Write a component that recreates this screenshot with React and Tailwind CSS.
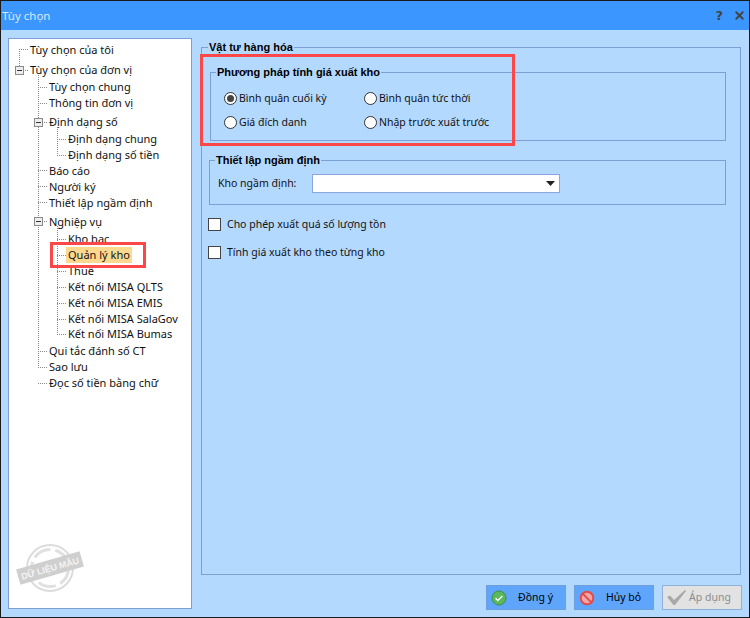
import { X } from 'lucide-react';

const treeRows = [
  { label: 'Tùy chọn của tôi', level: 0, cls: 'mt-[3px]' },
  { label: 'Tùy chọn của đơn vị', level: 0, cls: 'mt-[4px]' },
  { label: 'Tùy chọn chung', level: 1, cls: 'mt-[1px]' },
  { label: 'Thông tin đơn vị', level: 1, cls: '' },
  { label: 'Định dạng số', level: 1, cls: 'mt-[3px]' },
  { label: 'Định dạng chung', level: 2, cls: 'mt-[1px]' },
  { label: 'Định dạng số tiền', level: 2, cls: '' },
  { label: 'Báo cáo', level: 1, cls: '' },
  { label: 'Người ký', level: 1, cls: '' },
  { label: 'Thiết lập ngầm định', level: 1, cls: '' },
  { label: 'Nghiệp vụ', level: 1, cls: 'mt-[3px]' },
  { label: 'Kho bạc', level: 2, cls: 'mt-[1px]' },
  { label: 'Quản lý kho', level: 2, selected: true, cls: '' },
  { label: 'Thuế', level: 2, cls: '' },
  { label: 'Kết nối MISA QLTS', level: 2, cls: '' },
  { label: 'Kết nối MISA EMIS', level: 2, cls: '' },
  { label: 'Kết nối MISA SalaGov', level: 2, cls: '' },
  { label: 'Kết nối MISA Bumas', level: 2, cls: '-mt-[1px]' },
  { label: 'Qui tắc đánh số CT', level: 1, cls: 'mt-[1px]' },
  { label: 'Sao lưu', level: 1, cls: '' },
  { label: 'Đọc số tiền bằng chữ', level: 1, cls: '' },
];

const levelPad = ['pl-[21px]', 'pl-[40px]', 'pl-[59px]'];

function TreeLines() {
  // coordinates are relative to the tree panel's inside
  const dots = { stroke: '#8a8a8a', strokeDasharray: '1 1', fill: 'none' };
  const h = (x1, x2, y) => <path d={`M${x1} ${y + 0.5}H${x2}`} {...dots} key={`${x1}-${y}`} />;
  const v = (x, y1, y2) => <path d={`M${x + 0.5} ${y1}V${y2}`} {...dots} key={`v${x}-${y1}`} />;
  const box = (x, y) => (
    <g key={`b${x}-${y}`}>
      <rect x={x + 0.5} y={y + 0.5} width="8" height="8" fill="#eeeeee" stroke="#8a8a8a" />
      <path d={`M${x + 2} ${y + 4.5}H${x + 7}`} stroke="#333" />
    </g>
  );
  return (
    <svg className="absolute left-0 top-0 pointer-events-none" width="182" height="400">
      {v(10, 10, 27)}
      {h(10, 20, 10)}
      {h(14, 20, 31)}
      {v(29, 36, 327)}
      {[48, 64, 131, 147, 163, 312, 328, 344].map((y) => h(29, 39, y))}
      {h(33, 39, 83)}
      {h(33, 39, 182)}
      {v(48, 88, 116)}
      {h(48, 58, 100)}
      {h(48, 58, 116)}
      {v(48, 187, 295)}
      {[200, 216, 232, 248, 264, 280, 295].map((y) => h(48, 58, y))}
      {box(6, 27)}
      {box(25, 79)}
      {box(25, 178)}
    </svg>
  );
}

function Watermark() {
  return (
    <svg className="absolute left-[1px] bottom-[10px]" width="80" height="58" viewBox="0 0 80 58">
      <circle cx="40" cy="28" r="23" fill="none" stroke="#dcdcdc" strokeWidth="2" />
      <circle cx="40" cy="28" r="18.5" fill="none" stroke="#e0e0e0" strokeWidth="3" strokeDasharray="18 5" />
      <g transform="rotate(-16 40 28)">
        <rect x="7" y="20" width="66" height="16" fill="#cfcfcf" />
        <text x="40" y="31.5" textAnchor="middle" fontSize="9" fontWeight="700" fill="#f4f4f4" fontFamily="'Liberation Sans', sans-serif">
          DỮ LIỆU MẪU
        </text>
      </g>
    </svg>
  );
}

function Radio({ label, checked }) {
  return (
    <div className="flex items-center h-[16px]">
      <span className="w-[13px] h-[13px] rounded-full border border-[#333] bg-white flex items-center justify-center shrink-0">
        {checked && <span className="w-[7px] h-[7px] rounded-full bg-[#444]" />}
      </span>
      <span className="ml-[2px] pt-[1px]">{label}</span>
    </div>
  );
}

function Check({ label }) {
  return (
    <div className="flex items-center h-[14px]">
      <span className="w-[13px] h-[13px] border border-[#444] bg-white shrink-0" />
      <span className="ml-[6px] pt-[1px]">{label}</span>
    </div>
  );
}

function Group({ title, className, legendClass, children }) {
  return (
    <fieldset className={`border border-[#7d9fd6] min-w-0 ${className}`}>
      <legend
        className={`px-[1px] font-bold text-black text-[11px] leading-[14px] ${legendClass}`}
        style={{ fontFamily: "'Liberation Sans', sans-serif" }}
      >
        {title}
      </legend>
      {children}
    </fieldset>
  );
}

function Btn({ icon, label, disabled }) {
  return (
    <button
      className={`w-[80px] h-[25px] flex items-center border whitespace-nowrap ${
        disabled ? 'bg-[#e2e2e2] border-[#8fb0dc] text-[#8c8c8c]' : 'bg-[#5fa5fb] border-[#6f9fd8] text-black'
      }`}
    >
      <span className="w-[26px] pl-[4px] flex items-center shrink-0">{icon}</span>
      <span className={`flex-1 text-center ${disabled ? 'pr-[10px]' : 'pr-[7px]'}`}>{label}</span>
    </button>
  );
}

export default function App() {
  return (
    <div
      className="w-[750px] h-[618px] flex flex-col bg-[#b4d9ff] border border-[#1b1b1b] text-[10.5px] text-[#111] overflow-hidden"
      style={{ fontFamily: "'Noto Sans', sans-serif" }}
    >
      <div className="h-[29px] bg-[#3b96ff] shrink-0 flex items-center pl-[1px] pr-[3px] text-[#d9e9ff] text-[11.5px]">
        <span className="flex-1">Tùy chọn</span>
        <span className="text-[#444] font-bold text-[13px] mr-[10px]" style={{ fontFamily: "'DejaVu Sans', sans-serif" }}>?</span>
        <X size={13} strokeWidth={3.5} color="#444" />
      </div>

      <div className="flex-1 flex min-h-0 relative">
        <div className="relative ml-[7px] mt-[8px] mb-[8px] w-[184px] bg-white border border-[#7d9fd6] shrink-0 text-[11px]">
          <TreeLines />
          <div className="flex flex-col relative">
            {treeRows.map((r) => (
              <div key={r.label} className={`h-[16px] flex items-center ${levelPad[r.level]} ${r.cls}`}>
                <span className={r.selected ? 'bg-[#fdd98f] px-[2px] -ml-[2px] leading-[16px]' : ''}>{r.label}</span>
              </div>
            ))}
          </div>
          <Watermark />
        </div>

        <div className="flex-1 flex flex-col min-w-0 ml-[9px] mr-[8px] mt-[10px] mb-[7px]">
          <Group title="Vật tư hàng hóa" legendClass="-ml-[2px]" className="flex-1 px-[8px] min-h-0 flex flex-col">
            <Group title="Phương pháp tính giá xuất kho" legendClass="ml-[5px]" className="h-[76px] mr-[6px] mt-[11px]">
              <div className="grid grid-cols-[140px_1fr] gap-y-[8px] pl-[13px] pt-[11px]">
                <Radio label="Bình quân cuối kỳ" checked />
                <Radio label="Bình quân tức thời" />
                <Radio label="Giá đích danh" />
                <Radio label="Nhập trước xuất trước" />
              </div>
            </Group>
            <Group title="Thiết lập ngầm định" legendClass="ml-[5px]" className="h-[52px] mt-[12px] mr-[6px] -ml-[1px]">
              <div className="flex items-center pl-[8px] pt-[7px]">
                <span className="w-[94px] pt-[1px]">Kho ngầm định:</span>
                <div className="w-[248px] h-[19px] bg-white border border-[#8aa5e0] flex items-center justify-end pr-[4px]">
                  <svg width="9" height="5" viewBox="0 0 9 5"><path d="M0 0h9L4.5 5z" fill="#222" /></svg>
                </div>
              </div>
            </Group>
            <div className="flex flex-col gap-[14px] mt-[12px] -ml-[2px]">
              <Check label="Cho phép xuất quá số lượng tồn" />
              <Check label="Tính giá xuất kho theo từng kho" />
            </div>
          </Group>

          <div className="h-[25px] mt-[10px] flex justify-end gap-[8px] shrink-0 -mr-[1px]">
            <Btn
              label="Đồng ý"
              icon={
                <svg width="16" height="16" viewBox="0 0 16 16">
                  <circle cx="8" cy="8" r="7" fill="#5cb85c" stroke="#3f8f46" />
                  <path d="M4.500 8.200l2.400 2.300 4.400-4.400" fill="none" stroke="#fff" strokeWidth="1.4" />
                </svg>
              }
            />
            <Btn
              label="Hủy bỏ"
              icon={
                <svg width="16" height="16" viewBox="0 0 16 16">
                  <circle cx="8" cy="8" r="6.3" fill="#f4a6a6" stroke="#e24b4b" strokeWidth="2" />
                  <path d="M3.600 3.600l8.800 8.800" stroke="#e24b4b" strokeWidth="2" />
                </svg>
              }
            />
            <Btn
              disabled
              label="Áp dụng"
              icon={
                <svg width="20" height="16" viewBox="0 0 20 16">
                  <path d="M0 7l3-1.500 4 4.500L18 0l1 1L8 15h-1.500z" fill="#a8a8a8" />
                </svg>
              }
            />
          </div>
        </div>

        {/* red annotation boxes drawn over the dialog */}
        <div className="absolute left-[49px] top-[212px] w-[96px] h-[26px] border-[3px] border-[#fb4747] pointer-events-none" />
        <div className="absolute left-[199px] top-[24px] w-[315px] h-[92px] border-[3px] border-[#fb4747] pointer-events-none" />
      </div>
    </div>
  );
}
